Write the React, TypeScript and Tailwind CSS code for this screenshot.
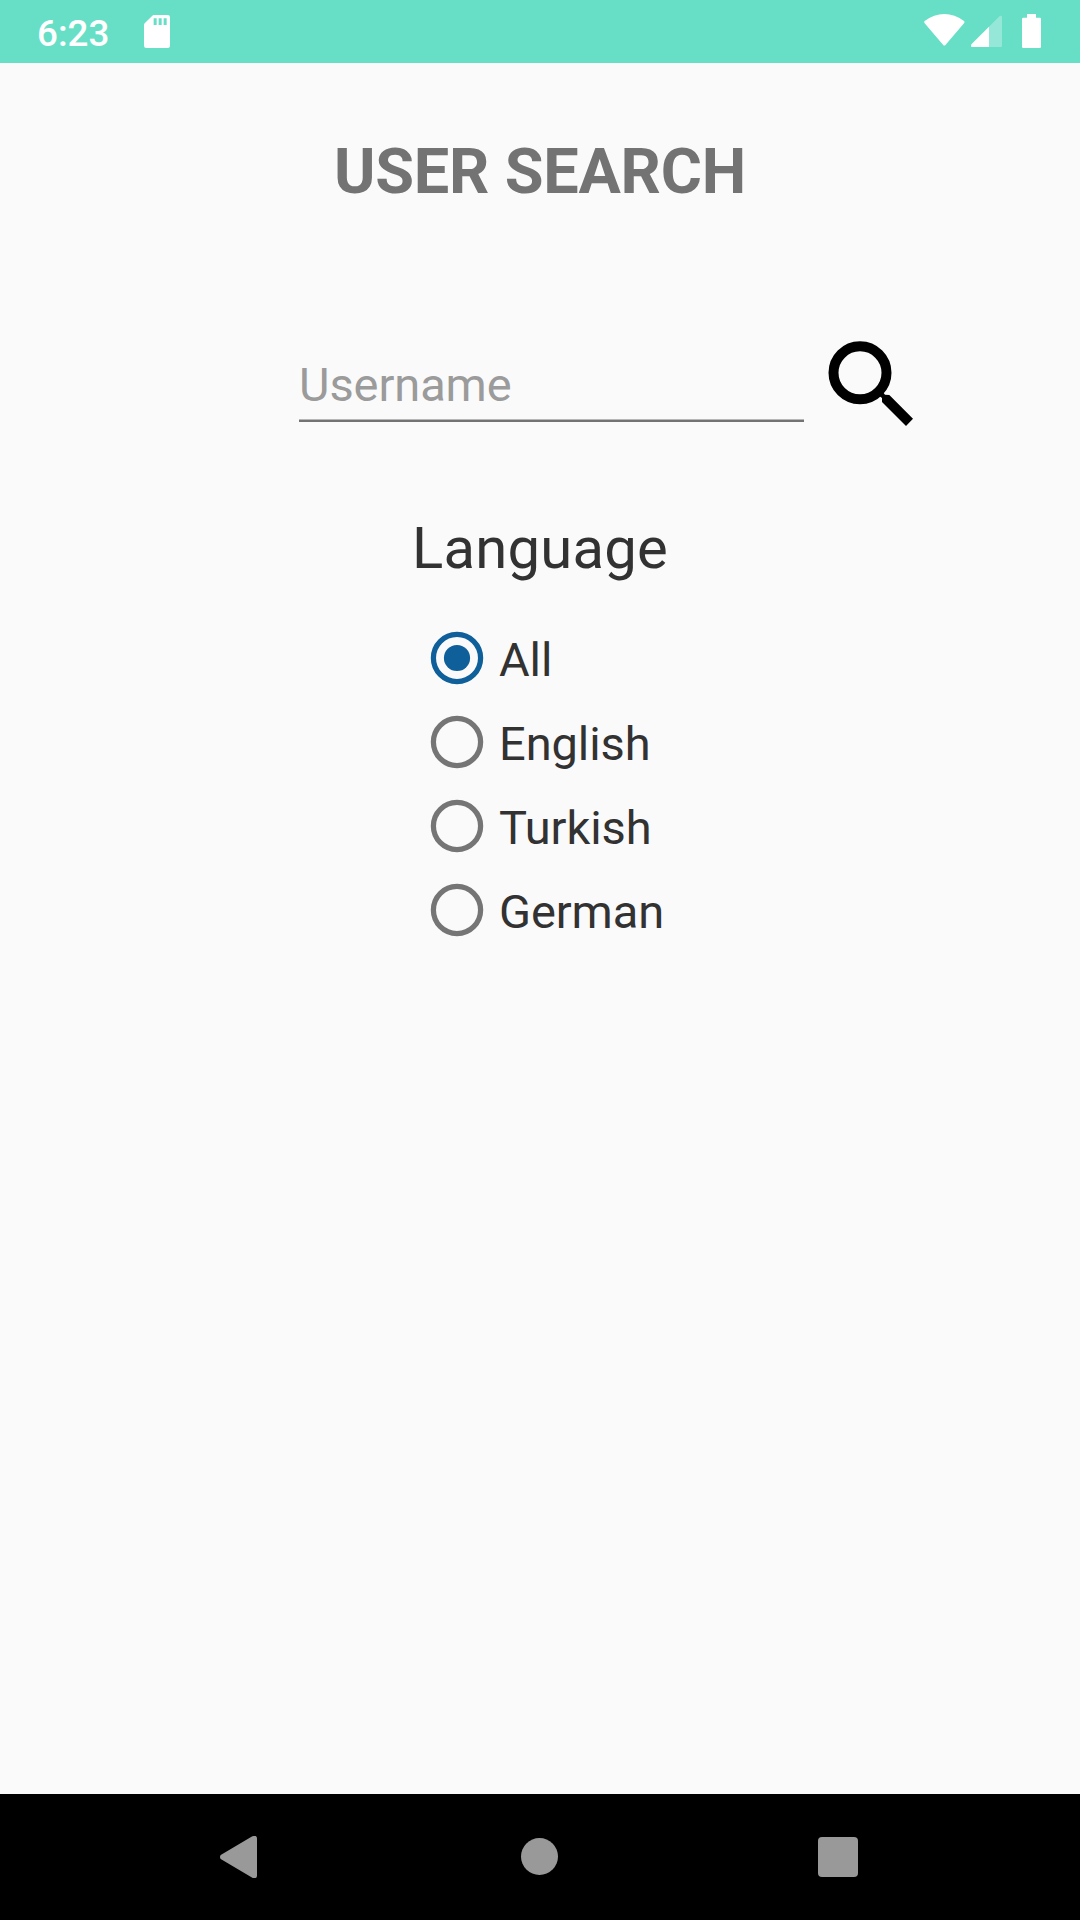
import { useState } from "react";

const languages = ["All", "English", "Turkish", "German"];

function StatusBar() {
  return (
    <header className="flex h-[63px] shrink-0 items-start bg-[#67dfc6] text-white">
      <span className="ml-[37px] mt-[10px] w-[107px] text-[36.75px] font-medium leading-[48px]">6:23</span>
      <svg className="mt-[15px] h-[33px] w-[26px]" viewBox="432 45 78 99" fill="#fff">
        <path
          fillRule="evenodd"
          d="M461 45H503Q510 45 510 52V137Q510 144 503 144H439Q432 144 432 137V75Q432 72 434 70L457 47Q459 45 461 45ZM461 55V75H470V55ZM476 55V75H485V55ZM491 55V75H500V55Z"
        />
      </svg>
      <div className="flex-1" />
      <svg className="mt-[14px] h-[32px] w-[41px]" viewBox="73 42 123 96" fill="#fff">
        <path d="M75 63Q103 42 134 42Q165 42 193 63Q196 66 193 70L138 134Q134 139 130 134L75 70Q72 66 75 63Z" />
      </svg>
      <svg className="ml-[6px] mt-[15px] h-[32px] w-[31px]" viewBox="213 45 93 96" fill="#fff">
        <path opacity=".3" d="M267 80L297 50Q301 46 304 48Q306 49 306 52V137Q306 141 302 141H267Z" />
        <path d="M267 80V141H216Q212 141 213 137Q213 134 215 132Z" />
      </svg>
      <svg className="ml-[20px] mr-[39px] mt-[14px] h-[34px] w-[19px]" viewBox="366 42 57 102" fill="#fff">
        <path d="M381 42H408V53H420Q423 53 423 57V140Q423 144 419 144H370Q366 144 366 140V57Q366 53 370 53H381Z" />
      </svg>
    </header>
  );
}

function SearchField() {
  return (
    <div className="mt-[132px] flex items-start pl-[299px]">
      <div className="w-[505px]">
        <input
          aria-label="Username"
          placeholder="Username"
          className="block h-[78px] w-full bg-transparent pb-[7px] pt-[15px] text-[47px] leading-[56px] tracking-[-0.08px] outline-none placeholder:text-[#9b9b9b] placeholder:opacity-100"
        />
        <div className="h-px bg-[#b7b7b7]" />
        <div className="h-[2px] bg-[#737373]" />
      </div>
      <button aria-label="Search" className="ml-[24px]">
        <svg className="block h-[85px] w-[85px]" viewBox="144 63 255 255">
          <circle cx="240" cy="158.5" r="79.5" fill="none" stroke="#000" strokeWidth="30" />
          <path d="M298 228L309 217L315 224L328 225L399 296L378 318L306 246V234Z" />
        </svg>
      </button>
    </div>
  );
}

function LanguagePicker() {
  const [selected, setSelected] = useState("All");
  return (
    <section className="mt-[88px] flex flex-col pl-[415px] text-[#323232]">
      <h2 className="-ml-[3px] text-[58px] leading-[68px] tracking-[0.22px]">Language</h2>
      <div role="radiogroup" className="mt-[34px] flex flex-col">
        {languages.map((name) => (
          <button
            key={name}
            role="radio"
            aria-checked={selected === name}
            onClick={() => setSelected(name)}
            className="flex h-[84px] items-center text-left"
          >
            <svg className="h-[84px] w-[84px]" viewBox="0 0 84 84">
              <circle
                cx="42"
                cy="42"
                r="23.6"
                fill="none"
                stroke={selected === name ? "#0e5f9a" : "#757575"}
                strokeWidth="5.25"
              />
              {selected === name && <circle cx="42" cy="42" r="13.1" fill="#0e5f9a" />}
            </svg>
            <span className="pt-[3px] text-[47px] leading-[56px] tracking-[-0.08px]">{name}</span>
          </button>
        ))}
      </div>
    </section>
  );
}

function NavigationBar() {
  return (
    <nav className="flex h-[126px] shrink-0 items-start bg-black">
      <svg className="ml-[220px] mt-[42px] h-[42px] w-[37px]" viewBox="60 168 111 126" fill="#999">
        <path d="M62 225L157 169Q162 167 167 168Q171 170 171 175V287Q171 292 167 294Q162 295 157 293L62 237Q58 231 62 225Z" />
      </svg>
      <div className="ml-[264px] mt-[44px] h-[37px] w-[37px] rounded-full bg-[#999]" />
      <div className="ml-[260px] mt-[43px] h-[40px] w-[40px] rounded-[4px] bg-[#999]" />
    </nav>
  );
}

export default function App() {
  return (
    <div className="flex h-[1920px] w-[1080px] flex-col overflow-hidden bg-[#fafafa] font-['Roboto',sans-serif]">
      <StatusBar />
      <main className="flex-1">
        <h1 className="mt-[71px] text-center text-[63px] font-bold leading-[75px] tracking-[-0.2px] text-[#737373]">
          USER SEARCH
        </h1>
        <SearchField />
        <LanguagePicker />
      </main>
      <NavigationBar />
    </div>
  );
}
